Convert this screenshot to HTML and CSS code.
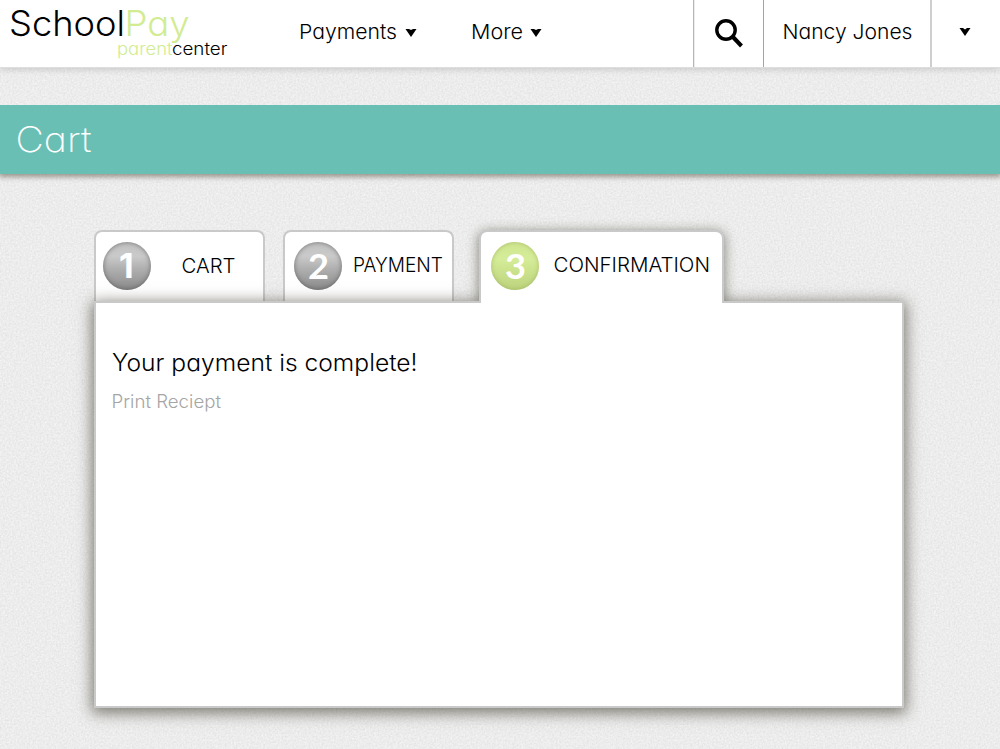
FILE: index.html
```html
<!DOCTYPE html>
<html lang="en">
<head>
<meta charset="utf-8">
<title>SchoolPay Parent Center - Cart</title>
<link rel="stylesheet" href="styles.css">
</head>
<body>
<svg class="paper" width="1000" height="749" aria-hidden="true">
  <filter id="grain" x="0" y="0" width="100%" height="100%" color-interpolation-filters="sRGB">
    <feTurbulence type="fractalNoise" baseFrequency="0.55" numOctaves="3" seed="4"/>
    <feColorMatrix values="0.1 0 0 0 0.876  0.1 0 0 0 0.876  0.1 0 0 0 0.876  0 0 0 0 1"/>
  </filter>
  <rect width="1000" height="749" filter="url(#grain)"/>
</svg>
<header class="topbar">
  <a class="brand">
    <svg width="240" height="67">
      <text class="logo" x="9" y="36" textLength="116" lengthAdjust="spacingAndGlyphs">School</text>
      <text class="logo lime" x="124.500" y="36" textLength="65" lengthAdjust="spacingAndGlyphs">Pay</text>
      <text class="sublogo lime" x="117" y="55" textLength="55.500" lengthAdjust="spacingAndGlyphs">parent</text>
      <text class="sublogo" x="172" y="55" textLength="55.500" lengthAdjust="spacingAndGlyphs">center</text>
    </svg>
  </a>
  <nav class="menu">
    <a class="menu-item"><svg width="120" height="67"><text class="nav-text" x="0" y="39" textLength="98" lengthAdjust="spacingAndGlyphs">Payments</text><path d="M106.500 29 L110 29 L112 30 L114 29 L117.500 29 L112 37Z"/></svg></a>
    <a class="menu-item"><svg width="75" height="67"><text class="nav-text" x="0" y="39" textLength="52" lengthAdjust="spacingAndGlyphs">More</text><path d="M59.500 29 L63 29 L65 30 L67 29 L70.500 29 L65 37Z"/></svg></a>
  </nav>
  <a class="search"><svg width="69" height="67"><circle cx="32" cy="30" r="9.200" fill="none" stroke="#000" stroke-width="3.400"/><path d="M38.500 36.500 L47.500 46" stroke="#000" stroke-width="4"/></svg></a>
  <a class="user"><svg width="166" height="67"><text class="nav-text" x="18.500" y="39" textLength="130" lengthAdjust="spacingAndGlyphs">Nancy Jones</text></svg></a>
  <a class="user-menu"><svg width="68" height="67"><path d="M27.500 28 L31 28 L33 29.500 L35 28 L38.500 28 L33 36Z"/></svg></a>
</header>
<h1 class="title"><svg width="110" height="68"><text class="title-text" x="15.500" y="47" textLength="76" lengthAdjust="spacingAndGlyphs">Cart</text></svg></h1>
<main class="checkout">
  <div class="tabs">
    <div class="tab tab-cart">
      <span class="ball gray"><svg width="48" height="48"><text class="digit digit-one" x="16" y="36">1</text></svg></span>
      <svg width="110" height="66"><text class="tab-text" x="30.500" y="41" textLength="54" lengthAdjust="spacingAndGlyphs">CART</text></svg>
    </div>
    <div class="tab tab-payment">
      <span class="ball gray"><svg width="48" height="48"><text class="digit" x="14" y="36.500" textLength="21" lengthAdjust="spacingAndGlyphs">2</text></svg></span>
      <svg width="108" height="66"><text class="tab-text" x="11" y="40" textLength="90" lengthAdjust="spacingAndGlyphs">PAYMENT</text></svg>
    </div>
    <div class="tab tab-active">
      <span class="ball green"><svg width="48" height="48"><text class="digit" x="14" y="36.500" textLength="21" lengthAdjust="spacingAndGlyphs">3</text></svg></span>
      <svg width="180" height="66"><text class="tab-text" x="14.500" y="40" textLength="156.500" lengthAdjust="spacingAndGlyphs">CONFIRMATION</text></svg>
    </div>
  </div>
  <section class="panel">
    <svg width="400" height="130">
      <text class="message" x="16" y="68" textLength="305.500" lengthAdjust="spacingAndGlyphs">Your payment is complete!</text>
      <text class="print" x="15.500" y="105" textLength="109.500" lengthAdjust="spacingAndGlyphs">Print Reciept</text>
    </svg>
  </section>
</main>
</body>
</html>
```
FILE: styles.css
```css
* { box-sizing: border-box; }
body {
  margin: 0;
  height: 749px;
  overflow: hidden;
  background: #ececec;
  font-family: Inter, Lato, sans-serif;
  font-feature-settings: "cv11";
}
svg { display: block; overflow: visible; }
.paper { position: absolute; inset: 0; z-index: -1; }

.topbar {
  display: flex;
  height: 68px;
  background: #fff;
  border-bottom: 1px solid #dedede;
  box-shadow: 0 2px 6px rgba(0, 0, 0, .14);
}
.brand { width: 299px; }
.menu { display: flex; gap: 52px; flex: 1; }
.search { width: 70px; border-left: 1px solid #b5b5b5; box-shadow: inset 1px 0 #ececec; }
.user { width: 167px; border-left: 1px solid #a3a3a3; }
.user-menu { width: 70px; border-left: 2px solid #cfcfcf; }

.logo { font-size: 35px; font-weight: 300; }
.sublogo { font-size: 17px; font-weight: 350; }
.lime { fill: #d2ec93; }
.nav-text, .tab-text { font-size: 20.5px; font-weight: 300; }

.title {
  height: 69px;
  margin: 37px 0 0;
  background: #6abfb5;
  box-shadow: 0 2px 5px 1px rgba(75, 65, 50, .5);
  clip-path: inset(0 0 -12px 0);
}
.title-text { font-size: 35px; font-weight: 250; fill: #fff; }

.checkout { width: 810px; margin: 56px 0 0 94px; }
.tabs { display: flex; height: 71px; }
.tab {
  display: flex;
  width: 171px;
  border: 2px solid #c9c9c9;
  border-bottom: 0;
  border-radius: 8px 8px 0 0;
  background: #fff;
}
.tab-cart { padding-left: 7px; margin-right: 18px; }
.tab-payment { padding-left: 9px; margin-right: 25px; }
.tab-active {
  position: relative;
  z-index: 2;
  width: 245px;
  height: 73px;
  padding-left: 10px;
  box-shadow: 0 2px 12px 1px rgba(75, 73, 60, .6);
  clip-path: polygon(-16px -16px, 261px -16px, 261px 71px, 243px 71px, 243px 100%, 2px 100%, 2px 71px, -16px 71px);
}
.ball { width: 48px; height: 48px; margin-top: 10px; border-radius: 50%; flex: none; }
.gray {
  background: linear-gradient(#c2c2c2 0%, #cacaca 30%, #b0b0b0 55%, #8b8b8b 100%);
  box-shadow: inset 0 0 5px rgba(80, 80, 80, .7);
}
.green {
  background: linear-gradient(#d0e691, #d5ec98 35%, #bdd37d);
  box-shadow: inset 0 0 4px rgba(135, 155, 70, .55);
}
.digit { font: 700 34px Lato, sans-serif; fill: #fff; }
.digit-one { font-family: Inter, sans-serif; }

.panel {
  position: relative;
  z-index: 1;
  height: 407px;
  background: #fff;
  border: 2px solid #c9c9c9;
  box-shadow: 0 3px 14px 2px rgba(75, 73, 60, .7);
}
.message { font-size: 23.5px; font-weight: 350; }
.print { font-size: 18px; font-weight: 300; fill: #a5a5a5; }
```
